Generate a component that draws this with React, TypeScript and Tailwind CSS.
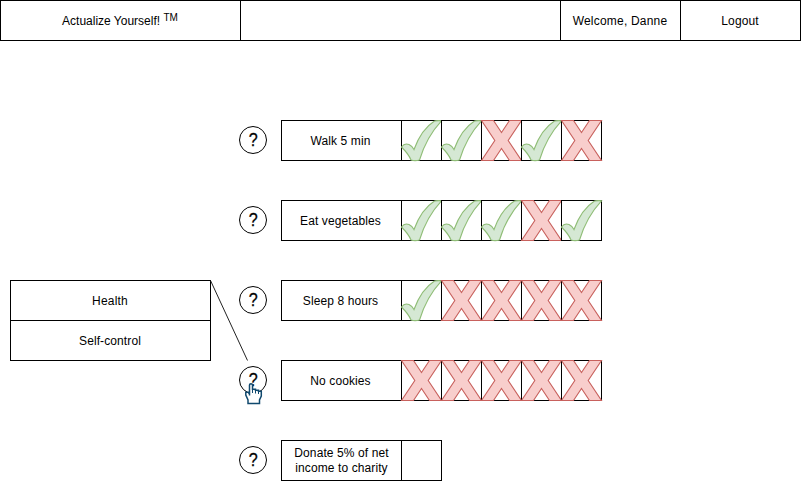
type Mark = "check" | "cross" | "empty";

interface Habit {
  name: string;
  marks: Mark[];
}

const habits: Habit[] = [
  { name: "Walk 5 min", marks: ["check", "check", "cross", "check", "cross"] },
  { name: "Eat vegetables", marks: ["check", "check", "check", "cross", "check"] },
  { name: "Sleep 8 hours", marks: ["check", "cross", "cross", "cross", "cross"] },
  { name: "No cookies", marks: ["cross", "cross", "cross", "cross", "cross"] },
  { name: "Donate 5% of net income to charity", marks: ["empty"] },
];

function CheckMark() {
  return (
    <svg viewBox="0 0 41 41" className="block h-[41px] w-[41px] shrink-0 overflow-visible">
      <path
        d="M0.5 27C2.5 24.2 5.5 23.4 8 24.6C10.3 25.7 12 27.5 13 29.5C17 18.5 24 7 33.5 1C36 0.5 38 0.5 40.5 0.8C30.5 11.5 23 25 18.5 40C15.5 40.8 12.5 40.8 10 40C8 35 4.5 31 0.5 27Z"
        fill="#d5e8d4"
        stroke="#8fbd76"
        strokeWidth="1.1"
      />
    </svg>
  );
}

function CrossMark() {
  return (
    <svg viewBox="0 0 41 41" className="block h-[41px] w-[41px] shrink-0 overflow-visible">
      <path
        d="M0.5 0.5H12.5L20.5 12.5L28.5 0.5H40.5L27.2 20.5L40.5 40.5H28.5L20.5 28.5L12.5 40.5H0.5L13.8 20.5Z"
        fill="#f8cecc"
        stroke="#c8615d"
        strokeWidth="1.1"
      />
    </svg>
  );
}

function Cell({ mark }: { mark: Mark }) {
  return (
    <div className="-ml-px grid h-[41px] w-[41px] shrink-0 border border-black">
      <div className="-m-px">
        {mark === "check" && <CheckMark />}
        {mark === "cross" && <CrossMark />}
      </div>
    </div>
  );
}

function HandCursor() {
  return (
    <svg viewBox="0 0 18 22" className="absolute left-[5px] top-[16px] h-[22px] w-[18px]">
      <path
        d="M4.5 12.5V2C4.5 0.4 7.5 0.4 7.5 2V6.3H10.5V7.3H13.5V8.3H16.3V13L14.5 17V20.6H3V17L0.8 12V9.3H3.2L4.5 11"
        fill="#fff"
        stroke="#10496e"
        strokeWidth="1.5"
      />
      <path d="M7.5 6.5V10M10.5 7V10.5M13.5 8V11" fill="none" stroke="#10496e" />
    </svg>
  );
}

function HelpButton({ hovered }: { hovered: boolean }) {
  return (
    <button className="relative mr-[14px] mt-[6px] flex h-7 w-7 shrink-0 items-center justify-center rounded-full border border-black bg-white pb-[2px] text-[19px] leading-none">
      <span className="scale-x-[0.85] [-webkit-text-stroke:0.3px_#000]">?</span>
      {hovered && <HandCursor />}
    </button>
  );
}

export default function App() {
  return (
    <div className="relative h-[481px] w-[801px] overflow-hidden bg-white font-['Liberation_Sans',Arial,sans-serif] text-[12px] leading-[15px] tracking-[0.1px] text-black">
      <header className="flex h-[41px] divide-x divide-black border border-black text-center">
        <div className="flex w-60 items-center justify-center pr-px pt-px">
          <span className="tracking-normal">
            Actualize Yourself! <sup className="top-[-4px] text-[10px]">TM</sup>
          </span>
        </div>
        <div className="w-80" />
        <div className="flex w-[120px] items-center justify-center pr-px pt-[2px] tracking-[0.2px]">Welcome, Danne</div>
        <div className="flex flex-1 items-center justify-center pr-px pt-[2px]">Logout</div>
      </header>

      <main className="flex pt-[79px]">
        <aside className="ml-[10px] mt-[160px] h-[81px] w-[201px] divide-y divide-black border border-black">
          <div className="flex h-10 items-center justify-center pr-px pt-[2px] tracking-[0.2px]">Health</div>
          <div className="flex h-[39px] items-center justify-center pr-px pt-[2px]">Self-control</div>
        </aside>
        <section className="ml-7 flex flex-col gap-[39px]">
          {habits.map((habit) => (
            <div key={habit.name} className="flex h-[41px] items-start">
              <HelpButton hovered={habit.name === "No cookies"} />
              <div
                className={
                  habit.marks[0] === "empty"
                    ? "flex h-[41px] w-[121px] items-center justify-center border border-black px-2 text-center"
                    : "flex h-[41px] w-[121px] items-center justify-center border border-black pr-[2px] pt-[2px] text-center"
                }
              >
                {habit.name}
              </div>
              {habit.marks.map((mark, i) => (
                <Cell key={i} mark={mark} />
              ))}
            </div>
          ))}
        </section>
      </main>

      <svg viewBox="0 0 38 81" className="pointer-events-none absolute left-[210px] top-[280px] h-[81px] w-[38px]">
        <path d="M0.5 0.5L37.5 80.5" stroke="#222" />
      </svg>
    </div>
  );
}
